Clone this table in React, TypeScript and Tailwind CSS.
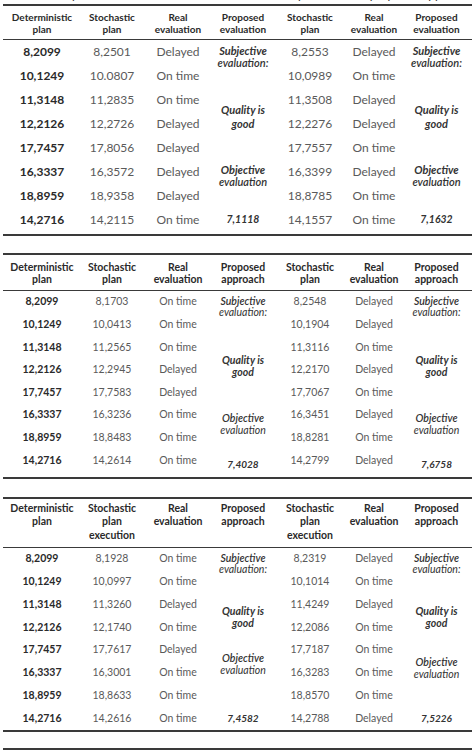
import React from "react";

type Prop = {
  row: string;
  col: string;
  pad: string;
  lines: { text: string; cls: string }[];
};

type TableProps = {
  head: string[][];
  headCls: string;
  headH: string;
  rowsCls: string;
  dataCls: string;
  body: string[][];
  proposed: Prop[];
  bodyPad: string;
};

const colStart = [
  "col-start-1",
  "col-start-2",
  "col-start-3",
  "col-start-4",
  "col-start-5",
  "col-start-6",
  "col-start-7",
];
const rowStart = [
  "row-start-1",
  "row-start-2",
  "row-start-3",
  "row-start-4",
  "row-start-5",
  "row-start-6",
  "row-start-7",
  "row-start-8",
];
// data columns (proposed columns 4 and 7 are filled separately)
const dataCols = [0, 1, 2, 4, 5];
const cols = "grid-cols-[78px_62px_70px_60px_74px_54px_71px]";

const Table: React.FC<TableProps> = ({
  head,
  headCls,
  headH,
  rowsCls,
  dataCls,
  body,
  proposed,
  bodyPad,
}) => {
  return (
    <div className="border-t-2 border-b-2 border-[#3a3a3a]">
      {/* header */}
      <div className={`grid ${cols} ${headH} border-b-[1.5px] border-[#3a3a3a]`}>
        {head.map((h, i) => (
          <div key={i} className={`flex flex-col items-center text-center font-bold text-[#2a2a2a] ${headCls}`}>
            {h.map((l, j) => (
              <span key={j}>{l}</span>
            ))}
          </div>
        ))}
      </div>
      {/* body */}
      <div className={`grid ${cols} ${rowsCls} ${bodyPad}`}>
        {body.map((r, i) =>
          r.map((v, j) => (
            <div
              key={`${i}-${j}`}
              className={`${rowStart[i]} ${colStart[dataCols[j]]} flex items-center justify-center ${dataCls} ${
                j === 0 ? "font-bold text-[#2a2a2a]" : "text-[#5a5a5a]"
              }`}
            >
              {v}
            </div>
          ))
        )}
        {proposed.map((p, i) => (
          <div key={i} className={`${p.row} ${p.col} flex flex-col items-center text-center italic text-[#333] ${p.pad}`}>
            {p.lines.map((l, j) => (
              <span key={j} className={l.cls}>
                {l.text}
              </span>
            ))}
          </div>
        ))}
      </div>
    </div>
  );
};

const t1Body = [
  ["8,2099", "8,2501", "Delayed", "8,2553", "Delayed"],
  ["10,1249", "10.0807", "On time", "10,0989", "On time"],
  ["11,3148", "11,2835", "On time", "11,3508", "Delayed"],
  ["12,2126", "12,2726", "Delayed", "12,2276", "Delayed"],
  ["17,7457", "17,8056", "Delayed", "17,7557", "On time"],
  ["16,3337", "16,3572", "Delayed", "16,3399", "Delayed"],
  ["18,8959", "18,9358", "Delayed", "18,8785", "On time"],
  ["14,2716", "14,2115", "On time", "14,1557", "On time"],
];

const t2Body = [
  ["8,2099", "8,1703", "On time", "8,2548", "Delayed"],
  ["10,1249", "10,0413", "On time", "10,1904", "Delayed"],
  ["11,3148", "11,2565", "On time", "11,3116", "On time"],
  ["12,2126", "12,2945", "Delayed", "12,2170", "Delayed"],
  ["17,7457", "17,7583", "Delayed", "17,7067", "On time"],
  ["16,3337", "16,3236", "On time", "16,3451", "Delayed"],
  ["18,8959", "18,8483", "On time", "18,8281", "On time"],
  ["14,2716", "14,2614", "On time", "14,2799", "Delayed"],
];

const t3Body = [
  ["8,2099", "8,1928", "On time", "8,2319", "Delayed"],
  ["10,1249", "10,0997", "On time", "10,1014", "On time"],
  ["11,3148", "11,3260", "Delayed", "11,4249", "Delayed"],
  ["12,2126", "12,1740", "On time", "12,2086", "On time"],
  ["17,7457", "17,7617", "Delayed", "17,7187", "On time"],
  ["16,3337", "16,3001", "On time", "16,3283", "On time"],
  ["18,8959", "18,8633", "On time", "18,8570", "On time"],
  ["14,2716", "14,2616", "On time", "14,2788", "Delayed"],
];

const bi = "font-bold";
const si = "font-semibold";

function proposed1(col: string, val: string): Prop[] {
  return [
    {
      row: "row-start-1 row-span-2",
      col,
      pad: "pt-[5px] text-[11px] leading-[12px]",
      lines: [
        { text: "Subjective", cls: bi },
        { text: "evaluation:", cls: si },
      ],
    },
    {
      row: "row-start-3 row-span-2",
      col,
      pad: "pt-[15px] text-[11px] leading-[14px]",
      lines: [
        { text: "Quality is", cls: bi },
        { text: "good", cls: bi },
      ],
    },
    {
      row: "row-start-6 row-span-2",
      col,
      pad: "pt-[4px] text-[11px] leading-[12px]",
      lines: [
        { text: "Objective", cls: bi },
        { text: "evaluation", cls: si },
      ],
    },
    {
      row: "row-start-8",
      col,
      pad: "pt-[5px] text-[10.5px] leading-[12px]",
      lines: [{ text: val, cls: bi }],
    },
  ];
}

function proposed2(col: string, val: string, objPad: string, qPad: string, valPad: string): Prop[] {
  return [
    {
      row: "row-start-1 row-span-2",
      col,
      pad: "pt-[5px] text-[10.5px] leading-[11px]",
      lines: [
        { text: "Subjective", cls: si },
        { text: "evaluation:", cls: "text-[10.5px]" },
      ],
    },
    {
      row: "row-start-3 row-span-2",
      col,
      pad: `${qPad} text-[10.5px] leading-[12px]`,
      lines: [
        { text: "Quality is", cls: bi },
        { text: "good", cls: bi },
      ],
    },
    {
      row: "row-start-5 row-span-3",
      col,
      pad: `${objPad} text-[10.5px] leading-[12px]`,
      lines: [
        { text: "Objective", cls: si },
        { text: "evaluation", cls: "text-[10.5px]" },
      ],
    },
    {
      row: "row-start-8",
      col,
      pad: `${valPad} text-[10px] leading-[12px]`,
      lines: [{ text: val, cls: bi }],
    },
  ];
}

export default function App() {
  return (
    <div className="ml-[3px] w-[469px] bg-white font-['Lato','Open_Sans',sans-serif]">
      {/* caption of the table, cut off at the top edge */}
      <div className="h-[3px] overflow-hidden">
        <div className="mt-[-12px] text-center text-[12px] leading-[14px] text-[#333]">
          Table 3. Comparison of the deterministic and stochastic plan with the proposed approach
        </div>
      </div>

      <div className="mt-[1px]">
        <Table
          head={[
            ["Deterministic", "plan"],
            ["Stochastic", "plan"],
            ["Real", "evaluation"],
            ["Proposed", "evaluation"],
            ["Stochastic", "plan"],
            ["Real", "evaluation"],
            ["Proposed", "evaluation"],
          ]}
          headCls="justify-center text-[10px] leading-[12px]"
          headH="h-[34px]"
          rowsCls="grid-rows-[repeat(8,24px)]"
          dataCls="text-[12px]"
          bodyPad="pb-[2px]"
          body={t1Body}
          proposed={[...proposed1("col-start-4", "7,1118"), ...proposed1("col-start-7", "7,1632")]}
        />
      </div>

      <div className="mt-[17px]">
        <Table
          head={[
            ["Deterministic", "plan"],
            ["Stochastic", "plan"],
            ["Real", "evaluation"],
            ["Proposed", "approach"],
            ["Stochastic", "plan"],
            ["Real", "evaluation"],
            ["Proposed", "approach"],
          ]}
          headCls="justify-center text-[10.5px] leading-[12px]"
          headH="h-[36px]"
          rowsCls="grid-rows-[repeat(8,22.6px)]"
          dataCls="text-[10.5px]"
          bodyPad="pb-[5px]"
          body={t2Body}
          proposed={[
            ...proposed2("col-start-4", "7,4028", "pt-[31px]", "pt-[18px]", "pt-[9px]"),
            ...proposed2("col-start-7", "7,6758", "pt-[31px]", "pt-[18px]", "pt-[9px]"),
          ]}
        />
      </div>

      <div className="mt-[18px]">
        <Table
          head={[
            ["Deterministic", "plan"],
            ["Stochastic", "plan", "execution"],
            ["Real", "evaluation"],
            ["Proposed", "approach"],
            ["Stochastic", "plan", "execution"],
            ["Real", "evaluation"],
            ["Proposed", "approach"],
          ]}
          headCls="justify-start pt-[3px] text-[10.5px] leading-[13.5px]"
          headH="h-[49px]"
          rowsCls="grid-rows-[repeat(8,22.8px)]"
          dataCls="text-[10.5px]"
          bodyPad="pb-0"
          body={t3Body}
          proposed={[
            ...proposed2("col-start-4", "7,4582", "pt-[13px]", "pt-[12px]", "pt-[5px]"),
            ...proposed2("col-start-7", "7,5226", "pt-[17px]", "pt-[12px]", "pt-[5px]"),
          ]}
        />
      </div>

      <div className="mt-[16px] border-t-2 border-[#3a3a3a] h-[4px]" />
    </div>
  );
}
